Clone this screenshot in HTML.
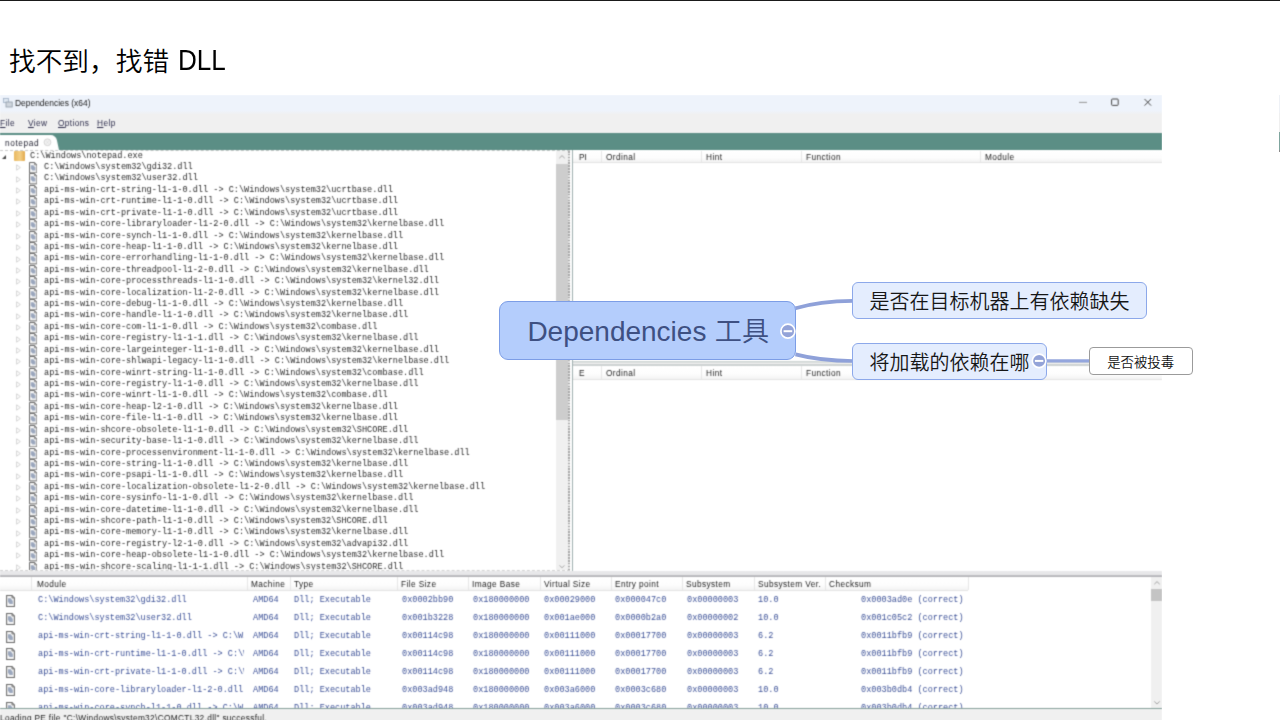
<!DOCTYPE html>
<html lang="zh-CN">
<head>
<meta charset="utf-8">
<title>找不到,找错 DLL</title>
<style>
html,body{margin:0;padding:0;background:#fff;}
body{width:1280px;height:720px;position:relative;overflow:hidden;font-family:"Liberation Sans","Noto Sans CJK SC",sans-serif;}
.abs{position:absolute;}
#topline{left:0;top:0;width:1280px;height:1px;background:#1a1a1a;}
#title{font-weight:350;left:9px;top:43.5px;font-size:26.7px;line-height:36px;color:#000;white-space:nowrap;letter-spacing:0;}
#win{left:0;top:95px;width:1162px;height:625px;overflow:hidden;background:#fff;}
#blur{left:-4px;top:-4px;width:1170px;height:648px;background:#fff;filter:url(#bl);}
#inner{left:4px;top:4px;width:1162px;height:644px;overflow:hidden;}
#win .ui{font-family:"Liberation Sans",sans-serif;font-size:8.3px;letter-spacing:0.4px;color:#222;white-space:nowrap;line-height:10px;}
#tbar{left:0;top:0;width:1162px;height:20px;background:linear-gradient(#eef3fb 0,#eef3fb 78%,#f0f0f0 97%);}
#mbar{left:0;top:19.6px;width:1162px;height:19px;background:#f0f0f0;}
#tabs{left:0;top:37.5px;width:1162px;height:17px;background:#5b8e85;}
#tab{left:-4px;top:40px;width:62.5px;height:15px;background:#fff;border-radius:4px 5px 0 0;transform:skewX(12deg);transform-origin:0 100%;}
.mono{font-family:"Liberation Mono",monospace;font-size:8.55px;line-height:11.42px;white-space:pre;color:#2a2a2a;}
.trow{position:absolute;left:0;height:11.42px;width:556px;}
.trow .ar{position:absolute;left:15.6px;top:2.2px;}
.trow .ic{position:absolute;left:28.9px;top:0;}
.trow .tx{position:absolute;left:44px;top:0;}
.hdr{position:absolute;height:12.5px;background:linear-gradient(#fff,#fdfdfd 60%,#f3f3f3);border-bottom:1px solid #e3e3e3;box-sizing:border-box;}
.hc{position:absolute;top:1.4px;}
.hs{position:absolute;top:0;bottom:0;width:1px;background:#e6e6e6;}
.lrow{position:absolute;left:0;height:17.86px;width:1150px;}
.lrow span{position:absolute;top:3.2px;color:#3a4f96;}
.lrow .m{left:38px;width:206px;overflow:hidden;}
.lrow .dic{position:absolute;left:6px;top:2.6px;}
.node{position:absolute;box-sizing:border-box;white-space:nowrap;font-weight:350;font-family:"Liberation Sans","Noto Sans CJK SC",sans-serif;}
</style>
</head>
<body>
<svg width="0" height="0" style="position:absolute"><defs>
<filter id="bl" x="0" y="0" width="100%" height="100%" color-interpolation-filters="sRGB"><feConvolveMatrix order="3" kernelMatrix="1 4 1 4 16 4 1 4 1" divisor="36" edgeMode="duplicate" preserveAlpha="true"/></filter>
</defs></svg>
<div class="abs" id="topline"></div>
<div class="abs" id="title">找不到，找错 <span style="display:inline-block;font-size:29.8px;line-height:30px;position:relative;top:-0.2px;margin-left:1.3px;transform:scaleX(0.875);transform-origin:0 50%">DLL</span></div>
<div class="abs" id="win"><div class="abs" id="blur"><div class="abs" id="inner">
<div class="abs" id="tbar"></div>
<div class="abs" id="mbar"></div>
<div class="abs" id="tabs"></div>
<svg class="abs" style="left:3px;top:3px" width="10" height="10" viewBox="0 0 10 10"><rect x="0.5" y="0.5" width="5" height="4" fill="#dfe8f2" stroke="#9fb0c4" stroke-width="0.8"/><rect x="3" y="4" width="6.2" height="5" fill="#cfd6de" stroke="#8e99a6" stroke-width="0.8"/></svg>
<div class="abs ui" style="left:15px;top:2.6px;color:#1a1a1a;font-size:8.45px;letter-spacing:0" id="wtitle">Dependencies (x64)</div>
<svg class="abs" style="left:1070px;top:0" width="92" height="16" viewBox="0 0 92 16"><path d="M9 7.4h8" stroke="#8a8a8a" stroke-width="0.9" fill="none"/><rect x="41.6" y="4" width="6.6" height="6.4" rx="0.9" fill="none" stroke="#444" stroke-width="1"/><path d="M74.5 4l6.6 6.6M81.1 4l-6.6 6.6" stroke="#444" stroke-width="1" fill="none"/></svg>
<div class="abs ui" style="left:0px;top:23px;color:#2b2b4a"><u>F</u>ile</div>
<div class="abs ui" style="left:28px;top:23px;color:#2b2b4a"><u>V</u>iew</div>
<div class="abs ui" style="left:58px;top:23px;color:#2b2b4a"><u>O</u>ptions</div>
<div class="abs ui" style="left:97px;top:23px;color:#2b2b4a"><u>H</u>elp</div>
<div class="abs" id="tab"></div>
<div class="abs ui" style="left:5px;top:43px;color:#1c1c2c;letter-spacing:0.6px" id="tabtx">notepad</div>
<svg class="abs" style="left:42.5px;top:43.3px" width="9" height="9" viewBox="0 0 9 9"><circle cx="4.5" cy="4.3" r="3.4" fill="#f2f2f2" stroke="#cfcfcf" stroke-width="0.9"/><path d="M3.2 3l2.6 2.6M5.8 3L3.2 5.6" stroke="#d8d8d8" stroke-width="0.7"/></svg>
<div class="abs" id="tree" style="left:0;top:55px;width:570px;height:421px;background:#fff;border-top:1px dashed #c9c9c9;border-bottom:1px dashed #d2d2d2;box-sizing:border-box;overflow:hidden">
<div class="trow" style="top:-0.40px"><svg class="abs" style="left:1px;top:3px" width="6" height="6" viewBox="0 0 6 6"><path d="M5 1v4H1z" fill="#444"/></svg><div class="abs" style="left:14px;top:0.8px;width:11px;height:9.6px;background:linear-gradient(90deg,#e9b860,#f3cf86 55%,#e2a94c);border-radius:1px"></div><div class="abs mono" style="left:30px;top:0">C:\Windows\notepad.exe</div></div>
<div class="trow" style="top:11.02px"><svg class="ar" width="5.2" height="7" viewBox="0 0 6 8"><path d="M0.7 0.9L5 4L0.7 7.1Z" fill="#fff" stroke="#c2c2c2" stroke-width="0.8"/></svg><svg class="ic" width="8.4" height="11.4" viewBox="0 0 8.4 11.4"><path d="M0.5 0.5H5.6L7.9 2.8V10.9H0.5Z" fill="#f6f6f6" stroke="#6a6a6a" stroke-width="1"/><path d="M5.6 0.5V2.8H7.9" fill="none" stroke="#6a6a6a" stroke-width="0.8"/><path d="M1.8 3.2h2.6l2 2.4v3H3.4L1.8 6.4z" fill="#9ba7bd"/></svg><div class="tx mono">C:\Windows\system32\gdi32.dll</div></div>
<div class="trow" style="top:22.44px"><svg class="ar" width="5.2" height="7" viewBox="0 0 6 8"><path d="M0.7 0.9L5 4L0.7 7.1Z" fill="#fff" stroke="#c2c2c2" stroke-width="0.8"/></svg><svg class="ic" width="8.4" height="11.4" viewBox="0 0 8.4 11.4"><path d="M0.5 0.5H5.6L7.9 2.8V10.9H0.5Z" fill="#f6f6f6" stroke="#6a6a6a" stroke-width="1"/><path d="M5.6 0.5V2.8H7.9" fill="none" stroke="#6a6a6a" stroke-width="0.8"/><path d="M1.8 3.2h2.6l2 2.4v3H3.4L1.8 6.4z" fill="#9ba7bd"/></svg><div class="tx mono">C:\Windows\system32\user32.dll</div></div>
<div class="trow" style="top:33.86px"><svg class="ar" width="5.2" height="7" viewBox="0 0 6 8"><path d="M0.7 0.9L5 4L0.7 7.1Z" fill="#fff" stroke="#c2c2c2" stroke-width="0.8"/></svg><svg class="ic" width="8.4" height="11.4" viewBox="0 0 8.4 11.4"><path d="M0.5 0.5H5.6L7.9 2.8V10.9H0.5Z" fill="#f6f6f6" stroke="#6a6a6a" stroke-width="1"/><path d="M5.6 0.5V2.8H7.9" fill="none" stroke="#6a6a6a" stroke-width="0.8"/><path d="M1.8 3.2h2.6l2 2.4v3H3.4L1.8 6.4z" fill="#9ba7bd"/></svg><div class="tx mono">api-ms-win-crt-string-l1-1-0.dll -&gt; C:\Windows\system32\ucrtbase.dll</div></div>
<div class="trow" style="top:45.28px"><svg class="ar" width="5.2" height="7" viewBox="0 0 6 8"><path d="M0.7 0.9L5 4L0.7 7.1Z" fill="#fff" stroke="#c2c2c2" stroke-width="0.8"/></svg><svg class="ic" width="8.4" height="11.4" viewBox="0 0 8.4 11.4"><path d="M0.5 0.5H5.6L7.9 2.8V10.9H0.5Z" fill="#f6f6f6" stroke="#6a6a6a" stroke-width="1"/><path d="M5.6 0.5V2.8H7.9" fill="none" stroke="#6a6a6a" stroke-width="0.8"/><path d="M1.8 3.2h2.6l2 2.4v3H3.4L1.8 6.4z" fill="#9ba7bd"/></svg><div class="tx mono">api-ms-win-crt-runtime-l1-1-0.dll -&gt; C:\Windows\system32\ucrtbase.dll</div></div>
<div class="trow" style="top:56.70px"><svg class="ar" width="5.2" height="7" viewBox="0 0 6 8"><path d="M0.7 0.9L5 4L0.7 7.1Z" fill="#fff" stroke="#c2c2c2" stroke-width="0.8"/></svg><svg class="ic" width="8.4" height="11.4" viewBox="0 0 8.4 11.4"><path d="M0.5 0.5H5.6L7.9 2.8V10.9H0.5Z" fill="#f6f6f6" stroke="#6a6a6a" stroke-width="1"/><path d="M5.6 0.5V2.8H7.9" fill="none" stroke="#6a6a6a" stroke-width="0.8"/><path d="M1.8 3.2h2.6l2 2.4v3H3.4L1.8 6.4z" fill="#9ba7bd"/></svg><div class="tx mono">api-ms-win-crt-private-l1-1-0.dll -&gt; C:\Windows\system32\ucrtbase.dll</div></div>
<div class="trow" style="top:68.12px"><svg class="ar" width="5.2" height="7" viewBox="0 0 6 8"><path d="M0.7 0.9L5 4L0.7 7.1Z" fill="#fff" stroke="#c2c2c2" stroke-width="0.8"/></svg><svg class="ic" width="8.4" height="11.4" viewBox="0 0 8.4 11.4"><path d="M0.5 0.5H5.6L7.9 2.8V10.9H0.5Z" fill="#f6f6f6" stroke="#6a6a6a" stroke-width="1"/><path d="M5.6 0.5V2.8H7.9" fill="none" stroke="#6a6a6a" stroke-width="0.8"/><path d="M1.8 3.2h2.6l2 2.4v3H3.4L1.8 6.4z" fill="#9ba7bd"/></svg><div class="tx mono">api-ms-win-core-libraryloader-l1-2-0.dll -&gt; C:\Windows\system32\kernelbase.dll</div></div>
<div class="trow" style="top:79.54px"><svg class="ar" width="5.2" height="7" viewBox="0 0 6 8"><path d="M0.7 0.9L5 4L0.7 7.1Z" fill="#fff" stroke="#c2c2c2" stroke-width="0.8"/></svg><svg class="ic" width="8.4" height="11.4" viewBox="0 0 8.4 11.4"><path d="M0.5 0.5H5.6L7.9 2.8V10.9H0.5Z" fill="#f6f6f6" stroke="#6a6a6a" stroke-width="1"/><path d="M5.6 0.5V2.8H7.9" fill="none" stroke="#6a6a6a" stroke-width="0.8"/><path d="M1.8 3.2h2.6l2 2.4v3H3.4L1.8 6.4z" fill="#9ba7bd"/></svg><div class="tx mono">api-ms-win-core-synch-l1-1-0.dll -&gt; C:\Windows\system32\kernelbase.dll</div></div>
<div class="trow" style="top:90.96px"><svg class="ar" width="5.2" height="7" viewBox="0 0 6 8"><path d="M0.7 0.9L5 4L0.7 7.1Z" fill="#fff" stroke="#c2c2c2" stroke-width="0.8"/></svg><svg class="ic" width="8.4" height="11.4" viewBox="0 0 8.4 11.4"><path d="M0.5 0.5H5.6L7.9 2.8V10.9H0.5Z" fill="#f6f6f6" stroke="#6a6a6a" stroke-width="1"/><path d="M5.6 0.5V2.8H7.9" fill="none" stroke="#6a6a6a" stroke-width="0.8"/><path d="M1.8 3.2h2.6l2 2.4v3H3.4L1.8 6.4z" fill="#9ba7bd"/></svg><div class="tx mono">api-ms-win-core-heap-l1-1-0.dll -&gt; C:\Windows\system32\kernelbase.dll</div></div>
<div class="trow" style="top:102.38px"><svg class="ar" width="5.2" height="7" viewBox="0 0 6 8"><path d="M0.7 0.9L5 4L0.7 7.1Z" fill="#fff" stroke="#c2c2c2" stroke-width="0.8"/></svg><svg class="ic" width="8.4" height="11.4" viewBox="0 0 8.4 11.4"><path d="M0.5 0.5H5.6L7.9 2.8V10.9H0.5Z" fill="#f6f6f6" stroke="#6a6a6a" stroke-width="1"/><path d="M5.6 0.5V2.8H7.9" fill="none" stroke="#6a6a6a" stroke-width="0.8"/><path d="M1.8 3.2h2.6l2 2.4v3H3.4L1.8 6.4z" fill="#9ba7bd"/></svg><div class="tx mono">api-ms-win-core-errorhandling-l1-1-0.dll -&gt; C:\Windows\system32\kernelbase.dll</div></div>
<div class="trow" style="top:113.80px"><svg class="ar" width="5.2" height="7" viewBox="0 0 6 8"><path d="M0.7 0.9L5 4L0.7 7.1Z" fill="#fff" stroke="#c2c2c2" stroke-width="0.8"/></svg><svg class="ic" width="8.4" height="11.4" viewBox="0 0 8.4 11.4"><path d="M0.5 0.5H5.6L7.9 2.8V10.9H0.5Z" fill="#f6f6f6" stroke="#6a6a6a" stroke-width="1"/><path d="M5.6 0.5V2.8H7.9" fill="none" stroke="#6a6a6a" stroke-width="0.8"/><path d="M1.8 3.2h2.6l2 2.4v3H3.4L1.8 6.4z" fill="#9ba7bd"/></svg><div class="tx mono">api-ms-win-core-threadpool-l1-2-0.dll -&gt; C:\Windows\system32\kernelbase.dll</div></div>
<div class="trow" style="top:125.22px"><svg class="ar" width="5.2" height="7" viewBox="0 0 6 8"><path d="M0.7 0.9L5 4L0.7 7.1Z" fill="#fff" stroke="#c2c2c2" stroke-width="0.8"/></svg><svg class="ic" width="8.4" height="11.4" viewBox="0 0 8.4 11.4"><path d="M0.5 0.5H5.6L7.9 2.8V10.9H0.5Z" fill="#f6f6f6" stroke="#6a6a6a" stroke-width="1"/><path d="M5.6 0.5V2.8H7.9" fill="none" stroke="#6a6a6a" stroke-width="0.8"/><path d="M1.8 3.2h2.6l2 2.4v3H3.4L1.8 6.4z" fill="#9ba7bd"/></svg><div class="tx mono">api-ms-win-core-processthreads-l1-1-0.dll -&gt; C:\Windows\system32\kernel32.dll</div></div>
<div class="trow" style="top:136.64px"><svg class="ar" width="5.2" height="7" viewBox="0 0 6 8"><path d="M0.7 0.9L5 4L0.7 7.1Z" fill="#fff" stroke="#c2c2c2" stroke-width="0.8"/></svg><svg class="ic" width="8.4" height="11.4" viewBox="0 0 8.4 11.4"><path d="M0.5 0.5H5.6L7.9 2.8V10.9H0.5Z" fill="#f6f6f6" stroke="#6a6a6a" stroke-width="1"/><path d="M5.6 0.5V2.8H7.9" fill="none" stroke="#6a6a6a" stroke-width="0.8"/><path d="M1.8 3.2h2.6l2 2.4v3H3.4L1.8 6.4z" fill="#9ba7bd"/></svg><div class="tx mono">api-ms-win-core-localization-l1-2-0.dll -&gt; C:\Windows\system32\kernelbase.dll</div></div>
<div class="trow" style="top:148.06px"><svg class="ar" width="5.2" height="7" viewBox="0 0 6 8"><path d="M0.7 0.9L5 4L0.7 7.1Z" fill="#fff" stroke="#c2c2c2" stroke-width="0.8"/></svg><svg class="ic" width="8.4" height="11.4" viewBox="0 0 8.4 11.4"><path d="M0.5 0.5H5.6L7.9 2.8V10.9H0.5Z" fill="#f6f6f6" stroke="#6a6a6a" stroke-width="1"/><path d="M5.6 0.5V2.8H7.9" fill="none" stroke="#6a6a6a" stroke-width="0.8"/><path d="M1.8 3.2h2.6l2 2.4v3H3.4L1.8 6.4z" fill="#9ba7bd"/></svg><div class="tx mono">api-ms-win-core-debug-l1-1-0.dll -&gt; C:\Windows\system32\kernelbase.dll</div></div>
<div class="trow" style="top:159.48px"><svg class="ar" width="5.2" height="7" viewBox="0 0 6 8"><path d="M0.7 0.9L5 4L0.7 7.1Z" fill="#fff" stroke="#c2c2c2" stroke-width="0.8"/></svg><svg class="ic" width="8.4" height="11.4" viewBox="0 0 8.4 11.4"><path d="M0.5 0.5H5.6L7.9 2.8V10.9H0.5Z" fill="#f6f6f6" stroke="#6a6a6a" stroke-width="1"/><path d="M5.6 0.5V2.8H7.9" fill="none" stroke="#6a6a6a" stroke-width="0.8"/><path d="M1.8 3.2h2.6l2 2.4v3H3.4L1.8 6.4z" fill="#9ba7bd"/></svg><div class="tx mono">api-ms-win-core-handle-l1-1-0.dll -&gt; C:\Windows\system32\kernelbase.dll</div></div>
<div class="trow" style="top:170.90px"><svg class="ar" width="5.2" height="7" viewBox="0 0 6 8"><path d="M0.7 0.9L5 4L0.7 7.1Z" fill="#fff" stroke="#c2c2c2" stroke-width="0.8"/></svg><svg class="ic" width="8.4" height="11.4" viewBox="0 0 8.4 11.4"><path d="M0.5 0.5H5.6L7.9 2.8V10.9H0.5Z" fill="#f6f6f6" stroke="#6a6a6a" stroke-width="1"/><path d="M5.6 0.5V2.8H7.9" fill="none" stroke="#6a6a6a" stroke-width="0.8"/><path d="M1.8 3.2h2.6l2 2.4v3H3.4L1.8 6.4z" fill="#9ba7bd"/></svg><div class="tx mono">api-ms-win-core-com-l1-1-0.dll -&gt; C:\Windows\system32\combase.dll</div></div>
<div class="trow" style="top:182.32px"><svg class="ar" width="5.2" height="7" viewBox="0 0 6 8"><path d="M0.7 0.9L5 4L0.7 7.1Z" fill="#fff" stroke="#c2c2c2" stroke-width="0.8"/></svg><svg class="ic" width="8.4" height="11.4" viewBox="0 0 8.4 11.4"><path d="M0.5 0.5H5.6L7.9 2.8V10.9H0.5Z" fill="#f6f6f6" stroke="#6a6a6a" stroke-width="1"/><path d="M5.6 0.5V2.8H7.9" fill="none" stroke="#6a6a6a" stroke-width="0.8"/><path d="M1.8 3.2h2.6l2 2.4v3H3.4L1.8 6.4z" fill="#9ba7bd"/></svg><div class="tx mono">api-ms-win-core-registry-l1-1-1.dll -&gt; C:\Windows\system32\kernelbase.dll</div></div>
<div class="trow" style="top:193.74px"><svg class="ar" width="5.2" height="7" viewBox="0 0 6 8"><path d="M0.7 0.9L5 4L0.7 7.1Z" fill="#fff" stroke="#c2c2c2" stroke-width="0.8"/></svg><svg class="ic" width="8.4" height="11.4" viewBox="0 0 8.4 11.4"><path d="M0.5 0.5H5.6L7.9 2.8V10.9H0.5Z" fill="#f6f6f6" stroke="#6a6a6a" stroke-width="1"/><path d="M5.6 0.5V2.8H7.9" fill="none" stroke="#6a6a6a" stroke-width="0.8"/><path d="M1.8 3.2h2.6l2 2.4v3H3.4L1.8 6.4z" fill="#9ba7bd"/></svg><div class="tx mono">api-ms-win-core-largeinteger-l1-1-0.dll -&gt; C:\Windows\system32\kernelbase.dll</div></div>
<div class="trow" style="top:205.16px"><svg class="ar" width="5.2" height="7" viewBox="0 0 6 8"><path d="M0.7 0.9L5 4L0.7 7.1Z" fill="#fff" stroke="#c2c2c2" stroke-width="0.8"/></svg><svg class="ic" width="8.4" height="11.4" viewBox="0 0 8.4 11.4"><path d="M0.5 0.5H5.6L7.9 2.8V10.9H0.5Z" fill="#f6f6f6" stroke="#6a6a6a" stroke-width="1"/><path d="M5.6 0.5V2.8H7.9" fill="none" stroke="#6a6a6a" stroke-width="0.8"/><path d="M1.8 3.2h2.6l2 2.4v3H3.4L1.8 6.4z" fill="#9ba7bd"/></svg><div class="tx mono">api-ms-win-core-shlwapi-legacy-l1-1-0.dll -&gt; C:\Windows\system32\kernelbase.dll</div></div>
<div class="trow" style="top:216.58px"><svg class="ar" width="5.2" height="7" viewBox="0 0 6 8"><path d="M0.7 0.9L5 4L0.7 7.1Z" fill="#fff" stroke="#c2c2c2" stroke-width="0.8"/></svg><svg class="ic" width="8.4" height="11.4" viewBox="0 0 8.4 11.4"><path d="M0.5 0.5H5.6L7.9 2.8V10.9H0.5Z" fill="#f6f6f6" stroke="#6a6a6a" stroke-width="1"/><path d="M5.6 0.5V2.8H7.9" fill="none" stroke="#6a6a6a" stroke-width="0.8"/><path d="M1.8 3.2h2.6l2 2.4v3H3.4L1.8 6.4z" fill="#9ba7bd"/></svg><div class="tx mono">api-ms-win-core-winrt-string-l1-1-0.dll -&gt; C:\Windows\system32\combase.dll</div></div>
<div class="trow" style="top:228.00px"><svg class="ar" width="5.2" height="7" viewBox="0 0 6 8"><path d="M0.7 0.9L5 4L0.7 7.1Z" fill="#fff" stroke="#c2c2c2" stroke-width="0.8"/></svg><svg class="ic" width="8.4" height="11.4" viewBox="0 0 8.4 11.4"><path d="M0.5 0.5H5.6L7.9 2.8V10.9H0.5Z" fill="#f6f6f6" stroke="#6a6a6a" stroke-width="1"/><path d="M5.6 0.5V2.8H7.9" fill="none" stroke="#6a6a6a" stroke-width="0.8"/><path d="M1.8 3.2h2.6l2 2.4v3H3.4L1.8 6.4z" fill="#9ba7bd"/></svg><div class="tx mono">api-ms-win-core-registry-l1-1-0.dll -&gt; C:\Windows\system32\kernelbase.dll</div></div>
<div class="trow" style="top:239.42px"><svg class="ar" width="5.2" height="7" viewBox="0 0 6 8"><path d="M0.7 0.9L5 4L0.7 7.1Z" fill="#fff" stroke="#c2c2c2" stroke-width="0.8"/></svg><svg class="ic" width="8.4" height="11.4" viewBox="0 0 8.4 11.4"><path d="M0.5 0.5H5.6L7.9 2.8V10.9H0.5Z" fill="#f6f6f6" stroke="#6a6a6a" stroke-width="1"/><path d="M5.6 0.5V2.8H7.9" fill="none" stroke="#6a6a6a" stroke-width="0.8"/><path d="M1.8 3.2h2.6l2 2.4v3H3.4L1.8 6.4z" fill="#9ba7bd"/></svg><div class="tx mono">api-ms-win-core-winrt-l1-1-0.dll -&gt; C:\Windows\system32\combase.dll</div></div>
<div class="trow" style="top:250.84px"><svg class="ar" width="5.2" height="7" viewBox="0 0 6 8"><path d="M0.7 0.9L5 4L0.7 7.1Z" fill="#fff" stroke="#c2c2c2" stroke-width="0.8"/></svg><svg class="ic" width="8.4" height="11.4" viewBox="0 0 8.4 11.4"><path d="M0.5 0.5H5.6L7.9 2.8V10.9H0.5Z" fill="#f6f6f6" stroke="#6a6a6a" stroke-width="1"/><path d="M5.6 0.5V2.8H7.9" fill="none" stroke="#6a6a6a" stroke-width="0.8"/><path d="M1.8 3.2h2.6l2 2.4v3H3.4L1.8 6.4z" fill="#9ba7bd"/></svg><div class="tx mono">api-ms-win-core-heap-l2-1-0.dll -&gt; C:\Windows\system32\kernelbase.dll</div></div>
<div class="trow" style="top:262.26px"><svg class="ar" width="5.2" height="7" viewBox="0 0 6 8"><path d="M0.7 0.9L5 4L0.7 7.1Z" fill="#fff" stroke="#c2c2c2" stroke-width="0.8"/></svg><svg class="ic" width="8.4" height="11.4" viewBox="0 0 8.4 11.4"><path d="M0.5 0.5H5.6L7.9 2.8V10.9H0.5Z" fill="#f6f6f6" stroke="#6a6a6a" stroke-width="1"/><path d="M5.6 0.5V2.8H7.9" fill="none" stroke="#6a6a6a" stroke-width="0.8"/><path d="M1.8 3.2h2.6l2 2.4v3H3.4L1.8 6.4z" fill="#9ba7bd"/></svg><div class="tx mono">api-ms-win-core-file-l1-1-0.dll -&gt; C:\Windows\system32\kernelbase.dll</div></div>
<div class="trow" style="top:273.68px"><svg class="ar" width="5.2" height="7" viewBox="0 0 6 8"><path d="M0.7 0.9L5 4L0.7 7.1Z" fill="#fff" stroke="#c2c2c2" stroke-width="0.8"/></svg><svg class="ic" width="8.4" height="11.4" viewBox="0 0 8.4 11.4"><path d="M0.5 0.5H5.6L7.9 2.8V10.9H0.5Z" fill="#f6f6f6" stroke="#6a6a6a" stroke-width="1"/><path d="M5.6 0.5V2.8H7.9" fill="none" stroke="#6a6a6a" stroke-width="0.8"/><path d="M1.8 3.2h2.6l2 2.4v3H3.4L1.8 6.4z" fill="#9ba7bd"/></svg><div class="tx mono">api-ms-win-shcore-obsolete-l1-1-0.dll -&gt; C:\Windows\system32\SHCORE.dll</div></div>
<div class="trow" style="top:285.10px"><svg class="ar" width="5.2" height="7" viewBox="0 0 6 8"><path d="M0.7 0.9L5 4L0.7 7.1Z" fill="#fff" stroke="#c2c2c2" stroke-width="0.8"/></svg><svg class="ic" width="8.4" height="11.4" viewBox="0 0 8.4 11.4"><path d="M0.5 0.5H5.6L7.9 2.8V10.9H0.5Z" fill="#f6f6f6" stroke="#6a6a6a" stroke-width="1"/><path d="M5.6 0.5V2.8H7.9" fill="none" stroke="#6a6a6a" stroke-width="0.8"/><path d="M1.8 3.2h2.6l2 2.4v3H3.4L1.8 6.4z" fill="#9ba7bd"/></svg><div class="tx mono">api-ms-win-security-base-l1-1-0.dll -&gt; C:\Windows\system32\kernelbase.dll</div></div>
<div class="trow" style="top:296.52px"><svg class="ar" width="5.2" height="7" viewBox="0 0 6 8"><path d="M0.7 0.9L5 4L0.7 7.1Z" fill="#fff" stroke="#c2c2c2" stroke-width="0.8"/></svg><svg class="ic" width="8.4" height="11.4" viewBox="0 0 8.4 11.4"><path d="M0.5 0.5H5.6L7.9 2.8V10.9H0.5Z" fill="#f6f6f6" stroke="#6a6a6a" stroke-width="1"/><path d="M5.6 0.5V2.8H7.9" fill="none" stroke="#6a6a6a" stroke-width="0.8"/><path d="M1.8 3.2h2.6l2 2.4v3H3.4L1.8 6.4z" fill="#9ba7bd"/></svg><div class="tx mono">api-ms-win-core-processenvironment-l1-1-0.dll -&gt; C:\Windows\system32\kernelbase.dll</div></div>
<div class="trow" style="top:307.94px"><svg class="ar" width="5.2" height="7" viewBox="0 0 6 8"><path d="M0.7 0.9L5 4L0.7 7.1Z" fill="#fff" stroke="#c2c2c2" stroke-width="0.8"/></svg><svg class="ic" width="8.4" height="11.4" viewBox="0 0 8.4 11.4"><path d="M0.5 0.5H5.6L7.9 2.8V10.9H0.5Z" fill="#f6f6f6" stroke="#6a6a6a" stroke-width="1"/><path d="M5.6 0.5V2.8H7.9" fill="none" stroke="#6a6a6a" stroke-width="0.8"/><path d="M1.8 3.2h2.6l2 2.4v3H3.4L1.8 6.4z" fill="#9ba7bd"/></svg><div class="tx mono">api-ms-win-core-string-l1-1-0.dll -&gt; C:\Windows\system32\kernelbase.dll</div></div>
<div class="trow" style="top:319.36px"><svg class="ar" width="5.2" height="7" viewBox="0 0 6 8"><path d="M0.7 0.9L5 4L0.7 7.1Z" fill="#fff" stroke="#c2c2c2" stroke-width="0.8"/></svg><svg class="ic" width="8.4" height="11.4" viewBox="0 0 8.4 11.4"><path d="M0.5 0.5H5.6L7.9 2.8V10.9H0.5Z" fill="#f6f6f6" stroke="#6a6a6a" stroke-width="1"/><path d="M5.6 0.5V2.8H7.9" fill="none" stroke="#6a6a6a" stroke-width="0.8"/><path d="M1.8 3.2h2.6l2 2.4v3H3.4L1.8 6.4z" fill="#9ba7bd"/></svg><div class="tx mono">api-ms-win-core-psapi-l1-1-0.dll -&gt; C:\Windows\system32\kernelbase.dll</div></div>
<div class="trow" style="top:330.78px"><svg class="ar" width="5.2" height="7" viewBox="0 0 6 8"><path d="M0.7 0.9L5 4L0.7 7.1Z" fill="#fff" stroke="#c2c2c2" stroke-width="0.8"/></svg><svg class="ic" width="8.4" height="11.4" viewBox="0 0 8.4 11.4"><path d="M0.5 0.5H5.6L7.9 2.8V10.9H0.5Z" fill="#f6f6f6" stroke="#6a6a6a" stroke-width="1"/><path d="M5.6 0.5V2.8H7.9" fill="none" stroke="#6a6a6a" stroke-width="0.8"/><path d="M1.8 3.2h2.6l2 2.4v3H3.4L1.8 6.4z" fill="#9ba7bd"/></svg><div class="tx mono">api-ms-win-core-localization-obsolete-l1-2-0.dll -&gt; C:\Windows\system32\kernelbase.dll</div></div>
<div class="trow" style="top:342.20px"><svg class="ar" width="5.2" height="7" viewBox="0 0 6 8"><path d="M0.7 0.9L5 4L0.7 7.1Z" fill="#fff" stroke="#c2c2c2" stroke-width="0.8"/></svg><svg class="ic" width="8.4" height="11.4" viewBox="0 0 8.4 11.4"><path d="M0.5 0.5H5.6L7.9 2.8V10.9H0.5Z" fill="#f6f6f6" stroke="#6a6a6a" stroke-width="1"/><path d="M5.6 0.5V2.8H7.9" fill="none" stroke="#6a6a6a" stroke-width="0.8"/><path d="M1.8 3.2h2.6l2 2.4v3H3.4L1.8 6.4z" fill="#9ba7bd"/></svg><div class="tx mono">api-ms-win-core-sysinfo-l1-1-0.dll -&gt; C:\Windows\system32\kernelbase.dll</div></div>
<div class="trow" style="top:353.62px"><svg class="ar" width="5.2" height="7" viewBox="0 0 6 8"><path d="M0.7 0.9L5 4L0.7 7.1Z" fill="#fff" stroke="#c2c2c2" stroke-width="0.8"/></svg><svg class="ic" width="8.4" height="11.4" viewBox="0 0 8.4 11.4"><path d="M0.5 0.5H5.6L7.9 2.8V10.9H0.5Z" fill="#f6f6f6" stroke="#6a6a6a" stroke-width="1"/><path d="M5.6 0.5V2.8H7.9" fill="none" stroke="#6a6a6a" stroke-width="0.8"/><path d="M1.8 3.2h2.6l2 2.4v3H3.4L1.8 6.4z" fill="#9ba7bd"/></svg><div class="tx mono">api-ms-win-core-datetime-l1-1-0.dll -&gt; C:\Windows\system32\kernelbase.dll</div></div>
<div class="trow" style="top:365.04px"><svg class="ar" width="5.2" height="7" viewBox="0 0 6 8"><path d="M0.7 0.9L5 4L0.7 7.1Z" fill="#fff" stroke="#c2c2c2" stroke-width="0.8"/></svg><svg class="ic" width="8.4" height="11.4" viewBox="0 0 8.4 11.4"><path d="M0.5 0.5H5.6L7.9 2.8V10.9H0.5Z" fill="#f6f6f6" stroke="#6a6a6a" stroke-width="1"/><path d="M5.6 0.5V2.8H7.9" fill="none" stroke="#6a6a6a" stroke-width="0.8"/><path d="M1.8 3.2h2.6l2 2.4v3H3.4L1.8 6.4z" fill="#9ba7bd"/></svg><div class="tx mono">api-ms-win-shcore-path-l1-1-0.dll -&gt; C:\Windows\system32\SHCORE.dll</div></div>
<div class="trow" style="top:376.46px"><svg class="ar" width="5.2" height="7" viewBox="0 0 6 8"><path d="M0.7 0.9L5 4L0.7 7.1Z" fill="#fff" stroke="#c2c2c2" stroke-width="0.8"/></svg><svg class="ic" width="8.4" height="11.4" viewBox="0 0 8.4 11.4"><path d="M0.5 0.5H5.6L7.9 2.8V10.9H0.5Z" fill="#f6f6f6" stroke="#6a6a6a" stroke-width="1"/><path d="M5.6 0.5V2.8H7.9" fill="none" stroke="#6a6a6a" stroke-width="0.8"/><path d="M1.8 3.2h2.6l2 2.4v3H3.4L1.8 6.4z" fill="#9ba7bd"/></svg><div class="tx mono">api-ms-win-core-memory-l1-1-0.dll -&gt; C:\Windows\system32\kernelbase.dll</div></div>
<div class="trow" style="top:387.88px"><svg class="ar" width="5.2" height="7" viewBox="0 0 6 8"><path d="M0.7 0.9L5 4L0.7 7.1Z" fill="#fff" stroke="#c2c2c2" stroke-width="0.8"/></svg><svg class="ic" width="8.4" height="11.4" viewBox="0 0 8.4 11.4"><path d="M0.5 0.5H5.6L7.9 2.8V10.9H0.5Z" fill="#f6f6f6" stroke="#6a6a6a" stroke-width="1"/><path d="M5.6 0.5V2.8H7.9" fill="none" stroke="#6a6a6a" stroke-width="0.8"/><path d="M1.8 3.2h2.6l2 2.4v3H3.4L1.8 6.4z" fill="#9ba7bd"/></svg><div class="tx mono">api-ms-win-core-registry-l2-1-0.dll -&gt; C:\Windows\system32\advapi32.dll</div></div>
<div class="trow" style="top:399.30px"><svg class="ar" width="5.2" height="7" viewBox="0 0 6 8"><path d="M0.7 0.9L5 4L0.7 7.1Z" fill="#fff" stroke="#c2c2c2" stroke-width="0.8"/></svg><svg class="ic" width="8.4" height="11.4" viewBox="0 0 8.4 11.4"><path d="M0.5 0.5H5.6L7.9 2.8V10.9H0.5Z" fill="#f6f6f6" stroke="#6a6a6a" stroke-width="1"/><path d="M5.6 0.5V2.8H7.9" fill="none" stroke="#6a6a6a" stroke-width="0.8"/><path d="M1.8 3.2h2.6l2 2.4v3H3.4L1.8 6.4z" fill="#9ba7bd"/></svg><div class="tx mono">api-ms-win-core-heap-obsolete-l1-1-0.dll -&gt; C:\Windows\system32\kernelbase.dll</div></div>
<div class="trow" style="top:410.72px"><svg class="ar" width="5.2" height="7" viewBox="0 0 6 8"><path d="M0.7 0.9L5 4L0.7 7.1Z" fill="#fff" stroke="#c2c2c2" stroke-width="0.8"/></svg><svg class="ic" width="8.4" height="11.4" viewBox="0 0 8.4 11.4"><path d="M0.5 0.5H5.6L7.9 2.8V10.9H0.5Z" fill="#f6f6f6" stroke="#6a6a6a" stroke-width="1"/><path d="M5.6 0.5V2.8H7.9" fill="none" stroke="#6a6a6a" stroke-width="0.8"/><path d="M1.8 3.2h2.6l2 2.4v3H3.4L1.8 6.4z" fill="#9ba7bd"/></svg><div class="tx mono">api-ms-win-shcore-scaling-l1-1-1.dll -&gt; C:\Windows\system32\SHCORE.dll</div></div>
<div class="abs" style="left:556px;top:0;width:12.2px;height:421px;background:#f0f0f0"></div>
<div class="abs" style="left:556px;top:12.5px;width:12.2px;height:256px;background:#cdcdcd"></div>
<svg class="abs" style="left:556px;top:0" width="12" height="12" viewBox="0 0 12 12"><path d="M3.3 7.2L6 4.6l2.7 2.6" fill="none" stroke="#9a9a9a" stroke-width="0.9"/></svg>
<svg class="abs" style="left:556.2px;top:410px" width="12" height="12" viewBox="0 0 12 12"><path d="M3.6 4.4L6 6.8l2.4-2.4" fill="none" stroke="#9a9a9a" stroke-width="0.9"/></svg>
<div class="abs" style="left:568.2px;top:0;width:1.4px;height:421px;background:repeating-linear-gradient(#a6a6a6 0,#a6a6a6 1.6px,#e2e2e2 1.6px,#e2e2e2 2.86px)"></div>
</div>
<div class="abs" style="left:571.6px;top:55px;width:1.4px;height:421px;background:#9eaeae"></div>
<div class="hdr" style="left:573px;top:55.599999999999994px;width:589px;height:12.9px"><span class="hc ui" style="left:6px;top:1.8px"><span style="letter-spacing:0">PI</span></span><span class="hc ui" style="left:33px;top:1.8px">Ordinal</span><span class="hc ui" style="left:133px;top:1.8px">Hint</span><span class="hc ui" style="left:233px;top:1.8px">Function</span><span class="hc ui" style="left:412px;top:1.8px">Module</span><i class="hs" style="left:28px"></i><i class="hs" style="left:128px"></i><i class="hs" style="left:228px"></i><i class="hs" style="left:407px"></i></div>
<div class="abs" style="left:573px;top:266px;width:589px;height:4.9px;background:linear-gradient(#cfd5d4 0,#cfd5d4 28%,#f0f0f0 34%,#f0f0f0 62%,#cdd2d2 68%,#cdd2d2 100%)"></div>
<div class="hdr" style="left:573px;top:270.8px;width:589px;height:13.8px"><span class="hc ui" style="left:6px;top:2.1px">E</span><span class="hc ui" style="left:33px;top:2.1px">Ordinal</span><span class="hc ui" style="left:133px;top:2.1px">Hint</span><span class="hc ui" style="left:233px;top:2.1px">Function</span><i class="hs" style="left:28px"></i><i class="hs" style="left:128px"></i><i class="hs" style="left:228px"></i><i class="hs" style="left:407px"></i></div>
<div class="abs" style="left:0;top:475.6px;width:1162px;height:6.5px;background:linear-gradient(#e9e9eb 0,#e6e6e8 70%,#b6b6ba 76%,#b2b2b6 100%)"></div>
<div class="abs" id="list" style="left:0;top:482px;width:1162px;height:131.4px;background:#fff;overflow:hidden">
<div class="hdr" style="left:0px;top:0px;width:968px;height:14.4px"><span class="hc ui" style="left:37px;top:2.4px">Module</span><span class="hc ui" style="left:251px;top:2.4px">Machine</span><span class="hc ui" style="left:294px;top:2.4px">Type</span><span class="hc ui" style="left:401px;top:2.4px">File Size</span><span class="hc ui" style="left:472px;top:2.4px">Image Base</span><span class="hc ui" style="left:544px;top:2.4px">Virtual Size</span><span class="hc ui" style="left:615px;top:2.4px">Entry point</span><span class="hc ui" style="left:686px;top:2.4px">Subsystem</span><span class="hc ui" style="left:758px;top:2.4px">Subsystem Ver.</span><span class="hc ui" style="left:829px;top:2.4px">Checksum</span><i class="hs" style="left:31px"></i><i class="hs" style="left:247px"></i><i class="hs" style="left:290px"></i><i class="hs" style="left:397px"></i><i class="hs" style="left:468px"></i><i class="hs" style="left:540px"></i><i class="hs" style="left:611px"></i><i class="hs" style="left:682px"></i><i class="hs" style="left:754px"></i><i class="hs" style="left:825px"></i><i class="hs" style="left:968px"></i></div>
<div class="lrow" style="top:15.20px"><svg class="dic" width="9" height="12" viewBox="0 0 8.4 11.4"><path d="M0.5 0.5H5.6L7.9 2.8V10.9H0.5Z" fill="#f6f6f6" stroke="#6a6a6a" stroke-width="1"/><path d="M5.6 0.5V2.8H7.9" fill="none" stroke="#6a6a6a" stroke-width="0.8"/><path d="M1.8 3.2h2.6l2 2.4v3H3.4L1.8 6.4z" fill="#9ba7bd"/></svg><span class="mono m">C:\Windows\system32\gdi32.dll</span><span class="mono" style="left:253px">AMD64</span><span class="mono" style="left:294px">Dll; Executable</span><span class="mono" style="left:402px">0x0002bb90</span><span class="mono" style="left:473px">0x180000000</span><span class="mono" style="left:544px">0x00029000</span><span class="mono" style="left:615px">0x000047c0</span><span class="mono" style="left:687px">0x00000003</span><span class="mono" style="left:758px">10.0</span><span class="mono" style="left:861px">0x0003ad0e (correct)</span></div>
<div class="lrow" style="top:33.06px"><svg class="dic" width="9" height="12" viewBox="0 0 8.4 11.4"><path d="M0.5 0.5H5.6L7.9 2.8V10.9H0.5Z" fill="#f6f6f6" stroke="#6a6a6a" stroke-width="1"/><path d="M5.6 0.5V2.8H7.9" fill="none" stroke="#6a6a6a" stroke-width="0.8"/><path d="M1.8 3.2h2.6l2 2.4v3H3.4L1.8 6.4z" fill="#9ba7bd"/></svg><span class="mono m">C:\Windows\system32\user32.dll</span><span class="mono" style="left:253px">AMD64</span><span class="mono" style="left:294px">Dll; Executable</span><span class="mono" style="left:402px">0x001b3228</span><span class="mono" style="left:473px">0x180000000</span><span class="mono" style="left:544px">0x001ae000</span><span class="mono" style="left:615px">0x0000b2a0</span><span class="mono" style="left:687px">0x00000002</span><span class="mono" style="left:758px">10.0</span><span class="mono" style="left:861px">0x001c05c2 (correct)</span></div>
<div class="lrow" style="top:50.92px"><svg class="dic" width="9" height="12" viewBox="0 0 8.4 11.4"><path d="M0.5 0.5H5.6L7.9 2.8V10.9H0.5Z" fill="#f6f6f6" stroke="#6a6a6a" stroke-width="1"/><path d="M5.6 0.5V2.8H7.9" fill="none" stroke="#6a6a6a" stroke-width="0.8"/><path d="M1.8 3.2h2.6l2 2.4v3H3.4L1.8 6.4z" fill="#9ba7bd"/></svg><span class="mono m">api-ms-win-crt-string-l1-1-0.dll -&gt; C:\Windows\system32\ucrtbase.dll</span><span class="mono" style="left:253px">AMD64</span><span class="mono" style="left:294px">Dll; Executable</span><span class="mono" style="left:402px">0x00114c98</span><span class="mono" style="left:473px">0x180000000</span><span class="mono" style="left:544px">0x00111000</span><span class="mono" style="left:615px">0x00017700</span><span class="mono" style="left:687px">0x00000003</span><span class="mono" style="left:758px">6.2</span><span class="mono" style="left:861px">0x0011bfb9 (correct)</span></div>
<div class="lrow" style="top:68.78px"><svg class="dic" width="9" height="12" viewBox="0 0 8.4 11.4"><path d="M0.5 0.5H5.6L7.9 2.8V10.9H0.5Z" fill="#f6f6f6" stroke="#6a6a6a" stroke-width="1"/><path d="M5.6 0.5V2.8H7.9" fill="none" stroke="#6a6a6a" stroke-width="0.8"/><path d="M1.8 3.2h2.6l2 2.4v3H3.4L1.8 6.4z" fill="#9ba7bd"/></svg><span class="mono m">api-ms-win-crt-runtime-l1-1-0.dll -&gt; C:\Windows\system32\ucrtbase.dll</span><span class="mono" style="left:253px">AMD64</span><span class="mono" style="left:294px">Dll; Executable</span><span class="mono" style="left:402px">0x00114c98</span><span class="mono" style="left:473px">0x180000000</span><span class="mono" style="left:544px">0x00111000</span><span class="mono" style="left:615px">0x00017700</span><span class="mono" style="left:687px">0x00000003</span><span class="mono" style="left:758px">6.2</span><span class="mono" style="left:861px">0x0011bfb9 (correct)</span></div>
<div class="lrow" style="top:86.64px"><svg class="dic" width="9" height="12" viewBox="0 0 8.4 11.4"><path d="M0.5 0.5H5.6L7.9 2.8V10.9H0.5Z" fill="#f6f6f6" stroke="#6a6a6a" stroke-width="1"/><path d="M5.6 0.5V2.8H7.9" fill="none" stroke="#6a6a6a" stroke-width="0.8"/><path d="M1.8 3.2h2.6l2 2.4v3H3.4L1.8 6.4z" fill="#9ba7bd"/></svg><span class="mono m">api-ms-win-crt-private-l1-1-0.dll -&gt; C:\Windows\system32\ucrtbase.dll</span><span class="mono" style="left:253px">AMD64</span><span class="mono" style="left:294px">Dll; Executable</span><span class="mono" style="left:402px">0x00114c98</span><span class="mono" style="left:473px">0x180000000</span><span class="mono" style="left:544px">0x00111000</span><span class="mono" style="left:615px">0x00017700</span><span class="mono" style="left:687px">0x00000003</span><span class="mono" style="left:758px">6.2</span><span class="mono" style="left:861px">0x0011bfb9 (correct)</span></div>
<div class="lrow" style="top:104.50px"><svg class="dic" width="9" height="12" viewBox="0 0 8.4 11.4"><path d="M0.5 0.5H5.6L7.9 2.8V10.9H0.5Z" fill="#f6f6f6" stroke="#6a6a6a" stroke-width="1"/><path d="M5.6 0.5V2.8H7.9" fill="none" stroke="#6a6a6a" stroke-width="0.8"/><path d="M1.8 3.2h2.6l2 2.4v3H3.4L1.8 6.4z" fill="#9ba7bd"/></svg><span class="mono m">api-ms-win-core-libraryloader-l1-2-0.dll -&gt; C:\Windows\system32\kernelbase.dll</span><span class="mono" style="left:253px">AMD64</span><span class="mono" style="left:294px">Dll; Executable</span><span class="mono" style="left:402px">0x003ad948</span><span class="mono" style="left:473px">0x180000000</span><span class="mono" style="left:544px">0x003a6000</span><span class="mono" style="left:615px">0x0003c680</span><span class="mono" style="left:687px">0x00000003</span><span class="mono" style="left:758px">10.0</span><span class="mono" style="left:861px">0x003b0db4 (correct)</span></div>
<div class="lrow" style="top:122.36px"><svg class="dic" width="9" height="12" viewBox="0 0 8.4 11.4"><path d="M0.5 0.5H5.6L7.9 2.8V10.9H0.5Z" fill="#f6f6f6" stroke="#6a6a6a" stroke-width="1"/><path d="M5.6 0.5V2.8H7.9" fill="none" stroke="#6a6a6a" stroke-width="0.8"/><path d="M1.8 3.2h2.6l2 2.4v3H3.4L1.8 6.4z" fill="#9ba7bd"/></svg><span class="mono m">api-ms-win-core-synch-l1-1-0.dll -&gt; C:\Windows\system32\kernelbase.dll</span><span class="mono" style="left:253px">AMD64</span><span class="mono" style="left:294px">Dll; Executable</span><span class="mono" style="left:402px">0x003ad948</span><span class="mono" style="left:473px">0x180000000</span><span class="mono" style="left:544px">0x003a6000</span><span class="mono" style="left:615px">0x0003c680</span><span class="mono" style="left:687px">0x00000003</span><span class="mono" style="left:758px">10.0</span><span class="mono" style="left:861px">0x003b0db4 (correct)</span></div>
<div class="abs" style="left:1150.5px;top:0;width:11.5px;height:131.4px;background:#f0f0f0"></div>
<div class="abs" style="left:1150.5px;top:12px;width:11.5px;height:12px;background:#c4c4c4"></div>
<svg class="abs" style="left:1150.5px;top:0" width="12" height="12" viewBox="0 0 12 12"><path d="M3.3 7.2L6 4.6l2.7 2.6" fill="none" stroke="#9a9a9a" stroke-width="0.9"/></svg>
<svg class="abs" style="left:1150.5px;top:119.6px" width="12" height="12" viewBox="0 0 12 12"><path d="M3.3 4.4L6 7l2.7-2.6" fill="none" stroke="#9a9a9a" stroke-width="0.9"/></svg>
</div>
<div class="abs" style="left:0;top:613.4px;width:1162px;height:32px;background:#f0f0f0;border-top:1.3px solid #86a09a;box-sizing:border-box"></div>
<div class="abs ui" style="left:0;top:618px;color:#222;letter-spacing:0.33px" id="status">Loading PE file &quot;C:\Windows\system32\COMCTL32.dll&quot; successful.</div>
</div></div></div>
<div class="abs" style="left:1279px;top:95px;width:1px;height:18px;background:#eef1f6"></div><div class="abs" style="left:1279px;top:113px;width:1px;height:19px;background:#efefef"></div><div class="abs" style="left:1279px;top:132px;width:1px;height:17.5px;background:#7fa59e"></div><div class="abs" style="left:1279px;top:150px;width:1px;height:1.5px;background:#8a8a8a"></div>
<svg class="abs" style="left:0;top:0" width="1280" height="720" viewBox="0 0 1280 720">
<path d="M795.5 308.2 C813 303 831 301 853 300.8" stroke="#8fa1d9" stroke-width="3.7" fill="none"/>
<path d="M795.5 354.4 C813 359 831 360.9 853 361" stroke="#8fa1d9" stroke-width="3.7" fill="none"/>
<path d="M1046 360.9H1089.5" stroke="#94a6dd" stroke-width="3.3" fill="none"/>
</svg>
<div class="node" id="n0" style="left:499px;top:301px;width:297px;height:59.3px;background:#b4cdfc;border:1px solid #7c9de6;border-radius:9px;"><span class="abs" style="left:27.4px;top:10.4px;font-size:28px;line-height:40px;color:#3e5082">Dependencies <span style="font-size:27.2px;margin-left:0.5px">工具</span></span></div>
<div class="node" id="n1" style="left:852px;top:282.2px;width:294.6px;height:36.4px;background:#e4edfe;border:1px solid #8ca8ea;border-radius:6px;"><span class="abs" style="left:16.4px;top:5.2px;font-size:20px;line-height:28px;color:#161616">是否在目标机器上有依赖缺失</span></div>
<div class="node" id="n2" style="left:852px;top:343px;width:195.4px;height:37.2px;background:#e4edfe;border:1px solid #8ca8ea;border-radius:6px;"><span class="abs" style="left:16.4px;top:5.4px;font-size:20px;line-height:28px;color:#161616">将加载的依赖在哪</span></div>
<div class="node" id="n3" style="left:1089px;top:347px;width:104px;height:27.8px;background:#fff;border:1px solid #9b9b9b;border-radius:4px;"><span class="abs" style="left:17.2px;top:5px;font-size:13.4px;line-height:20px;color:#111">是否被投毒</span></div>
<svg class="abs" style="left:0;top:0" width="1280" height="720" viewBox="0 0 1280 720">
<g><circle cx="787.9" cy="331.2" r="7" fill="#93a3d8" stroke="#fff" stroke-width="1.7"/><path d="M783.6 331.2h8.6" stroke="#fff" stroke-width="2"/></g>
<g><circle cx="1039.1" cy="360.9" r="6.75" fill="#93a3d8" stroke="#fff" stroke-width="1.6"/><path d="M1034.9 360.9h8.4" stroke="#fff" stroke-width="2"/></g>
</svg>
</body>
</html>
